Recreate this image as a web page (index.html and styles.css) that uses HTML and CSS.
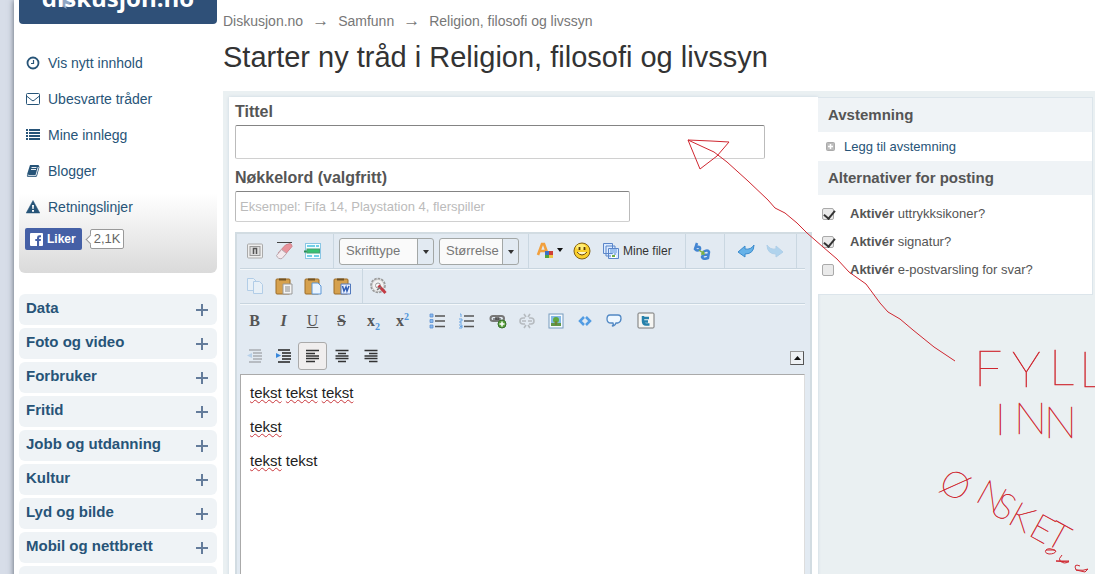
FILE: index.html
```html
<!DOCTYPE html>
<html lang="no">
<head>
<meta charset="utf-8">
<meta name="viewport" content="width=device-width, initial-scale=1">
<title>Starter ny tråd i Religion, filosofi og livssyn</title>
<link rel="stylesheet" href="styles.css">
</head>
<body>
<div class="page">
  <aside class="side">
    <a class="logo" href="#">
      <svg class="logo-bubble" width="16" height="20" viewBox="0 0 20 22" aria-hidden="true"><path d="M2 0C0 9 4 17 12 21l-1-5c3 0 6-2 8-5V0Z" fill="#8fa5c3"/></svg>
      <span class="logo-text">diskusjon.no</span>
    </a>
    <nav class="quick" aria-label="Snarveier">
      <a class="quick-link" href="#"><svg width="14" height="14" viewBox="0 0 14 14" fill="none" stroke="currentColor"><circle cx="7" cy="7" r="5.5" stroke-width="1.8"/><path d="M7.500 4v3.500H5" stroke-width="1.2"/></svg>Vis nytt innhold</a>
      <a class="quick-link" href="#"><svg width="14" height="14" viewBox="0 0 14 14" fill="none" stroke="currentColor"><rect x=".5" y="1.500" width="13" height="11" rx="1"/><path d="M.8 4.200 6 8.400q1 .8 2 0l5.200-4.200"/></svg>Ubesvarte tråder</a>
      <a class="quick-link" href="#"><svg width="14" height="14" viewBox="0 0 14 14" fill="currentColor"><path d="M0 1h2v2H0zM3 1h11v2H3zM0 4h2v2H0zM3 4h11v2H3zM0 7h2v2H0zM3 7h11v2H3zM0 10h2v2H0zM3 10h11v2H3z"/></svg>Mine innlegg</a>
      <a class="quick-link" href="#"><svg width="14" height="14" viewBox="0 0 14 14"><path d="M4 1h8.500l1 2-2.300 8.500-1 1.500H2Q.3 12.500 1 10.500Z" fill="currentColor"/><path d="M5.500 3.500h5M5 5.500h5M2 10.500q-.5 1 .5 1.200h7.300L12.300 3" fill="none" stroke="#fff" stroke-width=".9"/></svg>Blogger</a>
      <a class="quick-link" href="#"><svg width="14" height="14" viewBox="0 0 14 14"><path d="M7 .5 13.800 13H.2Z" fill="currentColor" stroke="currentColor" stroke-width=".5"/><path d="M6 5h2l-.4 4H6.400zM6 10h2v1.700H6z" fill="#fff"/></svg>Retningslinjer</a>
      <div class="likes">
        <button class="like" type="button"><svg width="13" height="13" viewBox="0 0 13 13"><rect width="13" height="13" rx="1" fill="#fff"/><path d="M7 13V8H5.300V6H7V4.700Q7 2.300 9.500 2.300H11V4.300H9.900q-.8 0-.8.800V6H11l-.3 2H9.100v5Z" fill="#4560a6"/></svg>Liker</button>
        <span class="count">2,1K</span>
      </div>
    </nav>
    <nav class="cats" aria-label="Kategorier">
      <button class="cat" type="button"><span>Data</span><i class="plus"></i></button>
      <button class="cat" type="button"><span>Foto og video</span><i class="plus"></i></button>
      <button class="cat" type="button"><span>Forbruker</span><i class="plus"></i></button>
      <button class="cat" type="button"><span>Fritid</span><i class="plus"></i></button>
      <button class="cat" type="button"><span>Jobb og utdanning</span><i class="plus"></i></button>
      <button class="cat" type="button"><span>Kultur</span><i class="plus"></i></button>
      <button class="cat" type="button"><span>Lyd og bilde</span><i class="plus"></i></button>
      <button class="cat" type="button"><span>Mobil og nettbrett</span><i class="plus"></i></button>
      <button class="cat" type="button" aria-label="Flere kategorier"></button>
    </nav>
  </aside>

  <main class="main">
    <nav class="crumbs" aria-label="Brødsmuler"><a href="#">Diskusjon.no</a><span class="arrow">→</span><a href="#">Samfunn</a><span class="arrow">→</span><a href="#">Religion, filosofi og livssyn</a></nav>
    <h1 class="title">Starter ny tråd i Religion, filosofi og livssyn</h1>

    <form class="panel">
      <div class="post">
        <label class="label" for="t">Tittel</label>
        <input class="field field-title" id="t" type="text">
        <label class="label" for="k">Nøkkelord (valgfritt)</label>
        <input class="field field-keys" id="k" type="text" placeholder="Eksempel: Fifa 14, Playstation 4, flerspiller">

        <div class="editor">
          <div class="bar ruled">
            <div class="group split">
              <button class="tool" type="button" aria-label="Kildekode"><svg width="16" height="16" viewBox="0 0 16 16"><rect x=".5" y="1" width="15" height="14" rx="1" fill="#eee" stroke="#aaa"/><rect x="3" y="3.500" width="10" height="9" fill="#ddd" stroke="#999"/><path d="M6.500 11V5.500h3V11" fill="none" stroke="#555" stroke-width="1.500"/></svg></button>
              <button class="tool" type="button" aria-label="Fjern formatering"><svg width="18" height="18" viewBox="0 0 18 18"><path d="M2 .5h15" stroke="#444"/><path d="M10.500 3 15 1.500q2 .5 2 3L8 15l-5-4Z" fill="#e8929b" stroke="#cf8088"/><path d="m6.500 7.500 5 4L7 16.500q-4 1-5.500-3Z" fill="#f3e9ed" stroke="#b9a9b0"/></svg></button>
              <button class="tool" type="button" aria-label="Mediefiler"><svg width="17" height="17" viewBox="0 0 17 17"><rect x="1.500" y=".5" width="15" height="15" fill="#f5feff" stroke="#8ac6e4"/><path d="M3 3h8M12 3h3M3 13h5M10 13h5" stroke="#72cfe8" stroke-width="2"/><path d="M0 8.500h3" stroke="#278b54" stroke-width="2"/><rect x="3" y="6" width="12.500" height="4" fill="#36c273" stroke="#4a9f74"/></svg></button>
            </div>
            <div class="group split combos">
              <span class="combo combo-font"><select aria-label="Skrifttype"><option>Skrifttype</option></select></span>
              <span class="combo combo-size"><select aria-label="Størrelse"><option>Størrelse</option></select></span>
            </div>
            <div class="group split extras">
              <button class="tool wide" type="button" aria-label="Tekstfarge"><svg width="28" height="18" viewBox="0 0 28 18"><path d="m2 13 4-11h2l4 11M3.500 9h6" fill="none" stroke="#f2a03d" stroke-width="2.600"/><path d="M9 9h4v4H9z" fill="#3b71c6"/><path d="M13 9h4v4h-4z" fill="#cf3f36"/><path d="M9 13h4v3H9z" fill="#52a53d"/><path d="M13 13h4v3h-4z" fill="#edc64b"/><path d="M21 6h6l-3 4Z" fill="#111"/></svg></button>
              <button class="tool" type="button" aria-label="Smileys"><svg width="18" height="18" viewBox="0 0 18 18"><circle cx="9" cy="9" r="8" fill="#fbd02c" stroke="#806018"/><ellipse cx="8" cy="5" rx="5" ry="3" fill="#ffed75"/><path d="M6.500 5v3M11.500 5v3" stroke="#5a3c08" stroke-width="1.800"/><path d="M4 10q5 6 10 0" fill="#fff6c5" stroke="#69450c"/></svg></button>
              <button class="tool files" type="button"><svg width="16" height="16" viewBox="0 0 16 16"><path d="M.5.500h9v10h-9zM3 3h9v10H3zM5.500 5.500h10v10h-10z" fill="#dcebff" stroke="#5b86c9"/><path d="M7 6h7v4H7z" fill="#9cc0ee"/><path d="M8 12h5v3H8z" fill="#fff"/><path d="M9 13h3" stroke="#71ad41" stroke-width="2"/></svg>Mine filer</button>
            </div>
            <div class="group split">
              <button class="tool ab" type="button" aria-label="Søk og erstatt"><svg width="18" height="18" viewBox="0 0 18 18" fill="none"><path d="M4 1 2 7q3 3 5 0 .5-3-3-2M10 10q5-3 6 0l-1 6q-5 2-6-1 1-3 6-2" stroke="#4385d2" stroke-width="2.500"/><path d="m6 8 4 3m-2 1 3 0-1-3" stroke="#7aaf45" stroke-width="1.500"/></svg></button>
            </div>
            <div class="group split history">
              <button class="tool" type="button" aria-label="Angre"><svg width="18" height="14" viewBox="0 0 18 14"><path d="m1 8 7-6v3q6 1 9-4-.2 9-9 9v3Z" fill="#66b2e8" stroke="#3b8bcd"/></svg></button>
              <button class="tool off" type="button" aria-label="Gjør om"><svg width="18" height="14" viewBox="0 0 18 14"><path d="m17 8-7-6v3Q4 6 1 1q.2 9 9 9v3Z" fill="#66b2e8" stroke="#63a6da"/></svg></button>
            </div>
          </div>

          <div class="bar ruled">
            <div class="group split">
              <button class="tool off" type="button" aria-label="Kopier"><svg width="18" height="18" viewBox="0 0 18 18" fill="#f3f9ff" stroke="#6ca2d8"><path d="M1.500 1.500h6l3 3v9h-9z"/><path d="M7.500 4.500h6l3 3v9h-9z"/></svg></button>
              <button class="tool" type="button" aria-label="Lim inn"><svg width="18" height="18" viewBox="0 0 18 18"><rect x="1" y="2" width="14" height="15" rx="1" fill="#d6a14e" stroke="#9c6c27"/><path d="M4 3.500V1.500h7v2Z" fill="#715225"/><path d="M8 7h9v10H8Z" fill="#f4f4f4" stroke="#999"/><path d="M10 10h5m-5 2h5m-5 2h5" stroke="#888"/></svg></button>
              <button class="tool" type="button" aria-label="Lim inn som tekst"><svg width="18" height="18" viewBox="0 0 18 18"><rect x="1" y="2" width="14" height="15" rx="1" fill="#d6a14e" stroke="#9c6c27"/><path d="M4 3.500V1.500h7v2Z" fill="#715225"/><path d="M8 6h6l3 3v8H8Z" fill="#e9f4ff" stroke="#5d97d6"/></svg></button>
              <button class="tool" type="button" aria-label="Lim inn fra Word"><svg width="18" height="18" viewBox="0 0 18 18"><rect x="1" y="2" width="14" height="15" rx="1" fill="#d6a14e" stroke="#9c6c27"/><path d="M4 3.500V1.500h7v2Z" fill="#715225"/><path d="M8 7h9.500v10H8Z" fill="#eaf1ff" stroke="#5279bd"/><path d="m9.500 9 1.500 5 2-4 1 4 2-5" fill="none" stroke="#315eb5" stroke-width="1.500"/></svg></button>
            </div>
            <div class="group">
              <button class="tool" type="button" aria-label="Innstillinger"><svg width="18" height="18" viewBox="0 0 18 18"><circle cx="9" cy="8.500" r="6.800" fill="#f2f2f2" stroke="#999" stroke-width="2" stroke-dasharray="2.500 1"/><circle cx="9" cy="8.500" r="6" fill="#f2f2f2" stroke="#bbb" stroke-width=".8"/><circle cx="9" cy="8.500" r="2.500" fill="#fafafa" stroke="#999"/><path d="m9.500 8.500 7 7.500" stroke="#c33b44" stroke-width="3"/><path d="m8 13 4-3" stroke="#777" stroke-width="1.500"/></svg></button>
            </div>
          </div>

          <div class="bar plain">
            <div class="group">
              <button class="tool letter" type="button" aria-label="Fet"><b>B</b></button>
              <button class="tool letter" type="button" aria-label="Kursiv"><i>I</i></button>
              <button class="tool letter" type="button" aria-label="Understreket"><u>U</u></button>
              <button class="tool letter" type="button" aria-label="Gjennomstreket"><s>S</s></button>
            </div>
            <div class="group near">
              <button class="tool letter" type="button" aria-label="Senket skrift"><span><b>x</b><sub>2</sub></span></button>
              <button class="tool letter" type="button" aria-label="Hevet skrift"><span><b>x</b><sup>2</sup></span></button>
            </div>
            <div class="group apart">
              <button class="tool" type="button" aria-label="Punktliste"><svg width="16" height="16" viewBox="0 0 16 16"><path d="M6 3h10M6 8h10M6 13.500h10" stroke="#555" stroke-width="1.300"/><path d="M1 1h3v3H1zM1 6.500h3v3H1zM1 12h3v3H1z" fill="#88b9ef" stroke="#5d91d2" stroke-width=".8"/></svg></button>
              <button class="tool" type="button" aria-label="Nummerert liste"><svg width="16" height="16" viewBox="0 0 16 16"><path d="M6 3h10M6 8h10M6 13.500h10" stroke="#555" stroke-width="1.300"/><path d="M2 1h1v3M1 6h3v2H2v2h2M1 12h3v3H1m1-1.500h2" fill="none" stroke="#69a5e4" stroke-width="1"/></svg></button>
            </div>
            <div class="group near">
              <button class="tool" type="button" aria-label="Lenke"><svg width="18" height="16" viewBox="0 0 18 16"><g fill="none" stroke="#777" stroke-width="2"><rect x="1.500" y="3" width="8" height="5" rx="2.500"/><rect x="7" y="3" width="8" height="5" rx="2.500"/></g><path d="M4 6h8" stroke="#333"/><circle cx="13" cy="11" r="4" fill="#5ba23d" stroke="#37702b"/><path d="M13 8.500v5M10.500 11h5" stroke="#fff" stroke-width="1.500"/></svg></button>
              <button class="tool off" type="button" aria-label="Fjern lenke"><svg width="16" height="16" viewBox="0 0 16 16" fill="none" stroke="#777" stroke-width="1.600"><path d="M6 5H4q-3 0-3 3t3 3h2M10 5h2q3 0 3 3t-3 3h-2M3 8h4m2 0h4M5 1l2 3m4-3L9 4M5 15l2-3m4 3-2-3"/></svg></button>
              <button class="tool" type="button" aria-label="Bilde"><svg width="16" height="16" viewBox="0 0 16 16"><rect x="1" y="1" width="14" height="14" fill="#f6faff" stroke="#779cbe"/><path d="M3 3h10v9H3z" fill="#83b9e5"/><path d="M3 10h10v3H3z" fill="#609747"/><circle cx="8" cy="7" r="3" fill="#60a83e"/><path d="M8 8v4" stroke="#80622c"/></svg></button>
              <button class="tool" type="button" aria-label="Kode"><svg width="14" height="10" viewBox="0 0 14 10" fill="none" stroke="#529ce3" stroke-width="2.500"><path d="M6 1 2 5l4 4M8 1l4 4-4 4"/></svg></button>
              <button class="tool" type="button" aria-label="Sitat"><svg width="16" height="16" viewBox="0 0 16 16"><path d="M4 2h8q3 0 3 3.500T12 10h-2q-1 3-4 3 2-1 1-3H5Q1 10 1 6t3-4Z" fill="#eef7ff" stroke="#5188c4" stroke-width="1.300"/></svg></button>
            </div>
            <div class="group near">
              <button class="tool" type="button" aria-label="Twitter"><svg width="18" height="18" viewBox="0 0 18 18"><rect x="1" y="1" width="16" height="15" rx="1" fill="#f6f6f3" stroke="#777"/><path d="M6 4v5q0 3.500 3 3.500h3.500M6 6h6M6 9.500h5" fill="none" stroke="#2681ab" stroke-width="2.500"/></svg></button>
            </div>
          </div>

          <div class="bar plain">
            <div class="group">
              <button class="tool off" type="button" aria-label="Mindre innrykk"><svg width="16" height="14" viewBox="0 0 16 14"><path d="M2 1h12M6 4h9M6 7h9M6 10h9M2 13h12" stroke="#555" stroke-width="1.300"/><path d="M5 4v5L0 6.500Z" fill="#78acdf"/></svg></button>
              <button class="tool" type="button" aria-label="Større innrykk"><svg width="16" height="14" viewBox="0 0 16 14"><path d="M2 1h12M6 4h9M6 7h9M6 10h9M2 13h12" stroke="#222" stroke-width="1.400"/><path d="M0 4v5l5-2.500Z" fill="#3988dc"/></svg></button>
              <button class="tool on" type="button" aria-label="Venstrejuster" aria-pressed="true"><svg width="14" height="14" viewBox="0 0 14 14"><path d="M0 1.500h13M0 4.500h9M0 7h13M0 9.500h13M0 12.500h9" stroke="#333" stroke-width="1.400"/></svg></button>
              <button class="tool" type="button" aria-label="Midtstill"><svg width="14" height="14" viewBox="0 0 14 14"><path d="M.5 1.500h13M3 4.500h8M.5 7h13M.5 9.500h13M3 12.500h8" stroke="#333" stroke-width="1.400"/></svg></button>
              <button class="tool" type="button" aria-label="Høyrejuster"><svg width="14" height="14" viewBox="0 0 14 14"><path d="M.5 1.500h13M5 4.500h8.500M.5 7h13M.5 9.500h13M5 12.500h8.500" stroke="#333" stroke-width="1.400"/></svg></button>
            </div>
            <button class="collapse" type="button" aria-label="Skjul verktøylinjen"><svg width="7" height="4" viewBox="0 0 7 4"><path d="M0 4 3.500 0 7 4Z" fill="#111"/></svg></button>
          </div>

          <div class="text" contenteditable="true" role="textbox" aria-label="Innlegg" aria-multiline="true" spellcheck="false">
            <p><span class="typo">tekst</span> <span class="typo">tekst</span> <span class="typo">tekst</span></p>
            <p><span class="typo">tekst</span></p>
            <p><span class="typo">tekst</span> tekst</p>
          </div>
        </div>
      </div>

      <div class="options">
        <h2 class="head">Avstemning</h2>
        <a class="poll" href="#"><svg width="9" height="9" viewBox="0 0 9 9"><rect x=".5" y=".5" width="8" height="8" rx="1" fill="#bbb" stroke="#aaa"/><path d="M4.500 2v5M2 4.500h5" stroke="#fff" stroke-width="1.500"/></svg>Legg til avstemning</a>
        <h2 class="head">Alternativer for posting</h2>
        <div class="checks">
          <label class="check"><input type="checkbox" checked><span><b>Aktivér</b> uttrykksikoner?</span></label>
          <label class="check"><input type="checkbox" checked><span><b>Aktivér</b> signatur?</span></label>
          <label class="check"><input type="checkbox"><span><b>Aktivér</b> e-postvarsling for svar?</span></label>
        </div>
      </div>
    </form>
  </main>
</div>

<svg class="notes" width="1095" height="574" viewBox="0 0 1095 574">
  <g class="ink">
    <path d="M955 361 934 347 913 330 900 319 888 312 880 303 866 284 849 272 837 259 823 247 807 233 797 223 785 213 775 208 768 200 748 181 727 162 714 152 701 146 688 140"/>
    <path d="M688 140 711 141 729 142 717 156 700 169 688 140"/>
    <path d="M1046 550q3-3 10 1-1 3-7 3-5-1-3-4h9M1062 555q-4 4-2 6 5 4 9 0l-13 0 13 1M1080 566q-7-3-4 4 8 1 12-1l-3 3-9-2"/>
  </g>
  <text class="pen" x="974 1012 1049 1079" y="386 387 385 387">FYLL</text>
  <text class="pen medium" x="995 1014 1044" y="435 434 438">INN</text>
  <text class="pen small" transform="translate(937 489) rotate(29)" x="0 38 58 77 101 119" y="0 -8 -5 -4 -4 -5">ØNSKET</text>
</svg>
</body>
</html>
```
FILE: styles.css
```css
* { box-sizing: border-box; }
body {
  margin: 0;
  height: 100vh;
  overflow: hidden;
  background: #d7dde8;
  color: #555;
  font: 13px/18px "Liberation Sans", Arial, sans-serif;
}
a { color: #275478; text-decoration: none; }
button, input, select { font: inherit; }
svg { flex: none; }
.page {
  display: flex;
  min-height: 100vh;
  margin-left: 14px;
  background: #fff;
  box-shadow: 0 0 6px #59616f;
}
.side { flex: none; width: 209px; padding: 0 6px 0 5px; }

.logo {
  position: relative;
  display: flex;
  justify-content: center;
  align-items: flex-end;
  height: 24px;
  overflow: hidden;
  border-radius: 0 0 4px 4px;
  background: #2f5078;
  color: #fff;
}
.logo-text {
  position: relative;
  padding-bottom: 12px;
  font: bold 24px/28px "Open Sans", sans-serif;
}
.logo-bubble { position: absolute; left: 38px; bottom: 13px; }

.quick {
  display: flex;
  flex-direction: column;
  height: 249px;
  padding: 21px 6px 0;
  border-radius: 0 0 6px 6px;
  background: linear-gradient(#fff 68%, #dadada);
}
.quick-link {
  display: flex;
  align-items: center;
  gap: 8px;
  height: 36px;
  padding-left: 1px;
  font-size: 14px;
}
.likes { display: flex; align-items: center; gap: 8px; margin-top: 3px; }
.like {
  display: flex;
  align-items: center;
  gap: 4px;
  height: 22px;
  padding: 0 6px 0 5px;
  border: 0;
  border-radius: 2px;
  background: #4560a6;
  color: #fff;
  font-size: 12px;
  font-weight: bold;
}
.count {
  position: relative;
  padding: 0 3px;
  border: 1px solid #999;
  border-radius: 2px;
  background: #fff;
  color: #666;
  font-size: 13px;
}
.count::before {
  content: "";
  position: absolute;
  left: -4px;
  top: 6px;
  width: 6px;
  height: 6px;
  border: solid #999;
  border-width: 0 0 1px 1px;
  background: #fff;
  transform: rotate(45deg);
}
.cats { display: flex; flex-direction: column; gap: 3px; padding-top: 21px; }
.cat {
  display: flex;
  justify-content: space-between;
  align-items: center;
  height: 31px;
  padding: 0 9px 3px 7px;
  border: 0;
  border-radius: 6px;
  background: #eff3f6;
  color: #275478;
  font-size: 15px;
  font-weight: bold;
}
.plus {
  width: 12px;
  height: 12px;
  margin-top: 3px;
  background:
    linear-gradient(#647c9b, #647c9b) center / 12px 2px no-repeat,
    linear-gradient(#647c9b, #647c9b) center / 2px 12px no-repeat;
}

.main { flex: 1; min-width: 0; display: flex; flex-direction: column; }
.crumbs { padding-top: 12px; font-size: 14px; }
.crumbs a { color: #777; }
.arrow { padding: 0 9px; color: #777; font-size: 17px; line-height: 16px; }
.title {
  margin: 9px 0 16px;
  color: #333;
  font-size: 29px;
  font-weight: normal;
  line-height: 36px;
}
.panel {
  flex: 1;
  display: flex;
  align-items: stretch;
  padding: 6px 2px 0 6px;
  background: #eaf0f2;
}
.post {
  flex: 1;
  min-width: 0;
  padding: 5px 6px 0;
  background: #fff;
  box-shadow: 0 0 3px #c9d5df;
}
.label {
  display: block;
  margin-bottom: 3px;
  color: #555;
  font-size: 16px;
  font-weight: bold;
  line-height: 20px;
}
.field {
  display: block;
  max-width: 100%;
  padding: 0 4px;
  border: 1px solid;
  border-color: #848484 #bbb #d0d0d0 #bbb;
  border-radius: 2px;
  background: #fff;
}
.field::placeholder { color: #bbb; }
.field-title { width: 530px; height: 34px; margin-bottom: 9px; }
.field-keys { width: 395px; height: 31px; margin-bottom: 10px; }

.editor { padding: 0 5px 0 3px; border: 2px solid #d2dce2; background: #e2eaf2; }
.bar { display: flex; align-items: center; height: 35px; }
.bar.ruled { border-bottom: 1px solid #c8d5df; box-shadow: 0 1px #f4f8fb; }
.bar.ruled .group { height: 34px; }
.bar.plain { padding-bottom: 2px; }
.group { display: flex; align-items: center; }
.split { padding-right: 6px; border-right: 1px solid #cad7e1; }
.near { margin-left: 3px; }
.apart { margin-left: 5px; }
.tool {
  display: flex;
  flex: none;
  align-items: center;
  justify-content: center;
  width: 29px;
  height: 28px;
  padding: 0;
  border: 1px solid transparent;
  border-radius: 3px;
  background: none;
  color: #333;
}
.wide { width: 34px; }
.files { width: auto; gap: 4px; padding: 0 6px; font-size: 12px; }
.ab { width: 32px; }
.extras { padding-left: 4px; }
.history { padding-left: 7px; }
.off { opacity: .4; }
.on { border-color: #aaa; background: #f0eeee; }
.letter { color: #555; font: 16px/18px "Liberation Serif", serif; }
.letter i, .letter s { font-weight: bold; }
.letter sub, .letter sup { color: #4f96dc; font-size: 10px; font-weight: bold; line-height: 0; }
.combos { gap: 5px; padding: 0 9px 0 5px; }
.combo { position: relative; display: flex; }
.combo select {
  width: 100%;
  height: 27px;
  padding: 0 6px;
  appearance: none;
  border: 1px solid #a3a7a6;
  border-radius: 3px;
  background: linear-gradient(90deg, transparent calc(100% - 16px), #a3a7a6 0, #a3a7a6 calc(100% - 15px), #e2eaf2 0), #fafafa;
  color: #777;
}
.combo::after {
  content: "";
  position: absolute;
  right: 5px;
  top: 12px;
  border: solid transparent;
  border-width: 4px 3px 0;
  border-top-color: #333;
  pointer-events: none;
}
.combo-font { width: 95px; }
.combo-size { width: 80px; }
.collapse {
  display: flex;
  align-items: center;
  justify-content: center;
  width: 14px;
  height: 14px;
  margin: 5px 1px 0 auto;
  padding: 0;
  border: 1px solid #999;
  border-right-color: #555;
  border-bottom-color: #555;
  background: #eef1f4;
}
.text {
  height: 240px;
  padding: 9px;
  border: 1px solid #aaa;
  border-right-color: #ddd;
  background: #fff;
  color: #222;
  font-size: 15px;
}
.text p { margin: 0 0 16px; }
.typo { text-decoration: underline wavy #c9383d 1px; text-underline-offset: 1px; }

.options {
  flex: none;
  align-self: flex-start;
  width: 275px;
  border: 1px solid #dce5eb;
  border-left: 0;
  background: #fff;
}
.head {
  margin: 0;
  padding: 8px 10px;
  background: #eff3f6;
  color: #555;
  font-size: 15px;
  line-height: 18px;
}
.poll { display: flex; align-items: center; gap: 9px; height: 29px; padding-left: 8px; }
.checks { display: flex; flex-direction: column; gap: 10px; padding: 10px 4px 15px; }
.check { display: flex; align-items: center; gap: 16px; }
.check input {
  flex: none;
  width: 12px;
  height: 12px;
  margin: 0;
  appearance: none;
  border: 1px solid #aaa;
  border-radius: 2px;
  background: #eaeaea;
}
.check input:checked::after {
  content: "";
  display: block;
  width: 5px;
  height: 9px;
  margin: -1px 0 0 3px;
  border: solid #333;
  border-width: 0 2px 2px 0;
  transform: rotate(40deg);
}

.notes { position: absolute; left: 0; top: 0; pointer-events: none; }
.ink { fill: none; stroke: #cf2730; stroke-width: 1; }
.pen { fill: #cf2730; stroke: #cf2730; stroke-width: .5; font: 100 50px Lato, sans-serif; }
.pen.medium { font-size: 44px; }
.pen.small { font-size: 36px; }
```
